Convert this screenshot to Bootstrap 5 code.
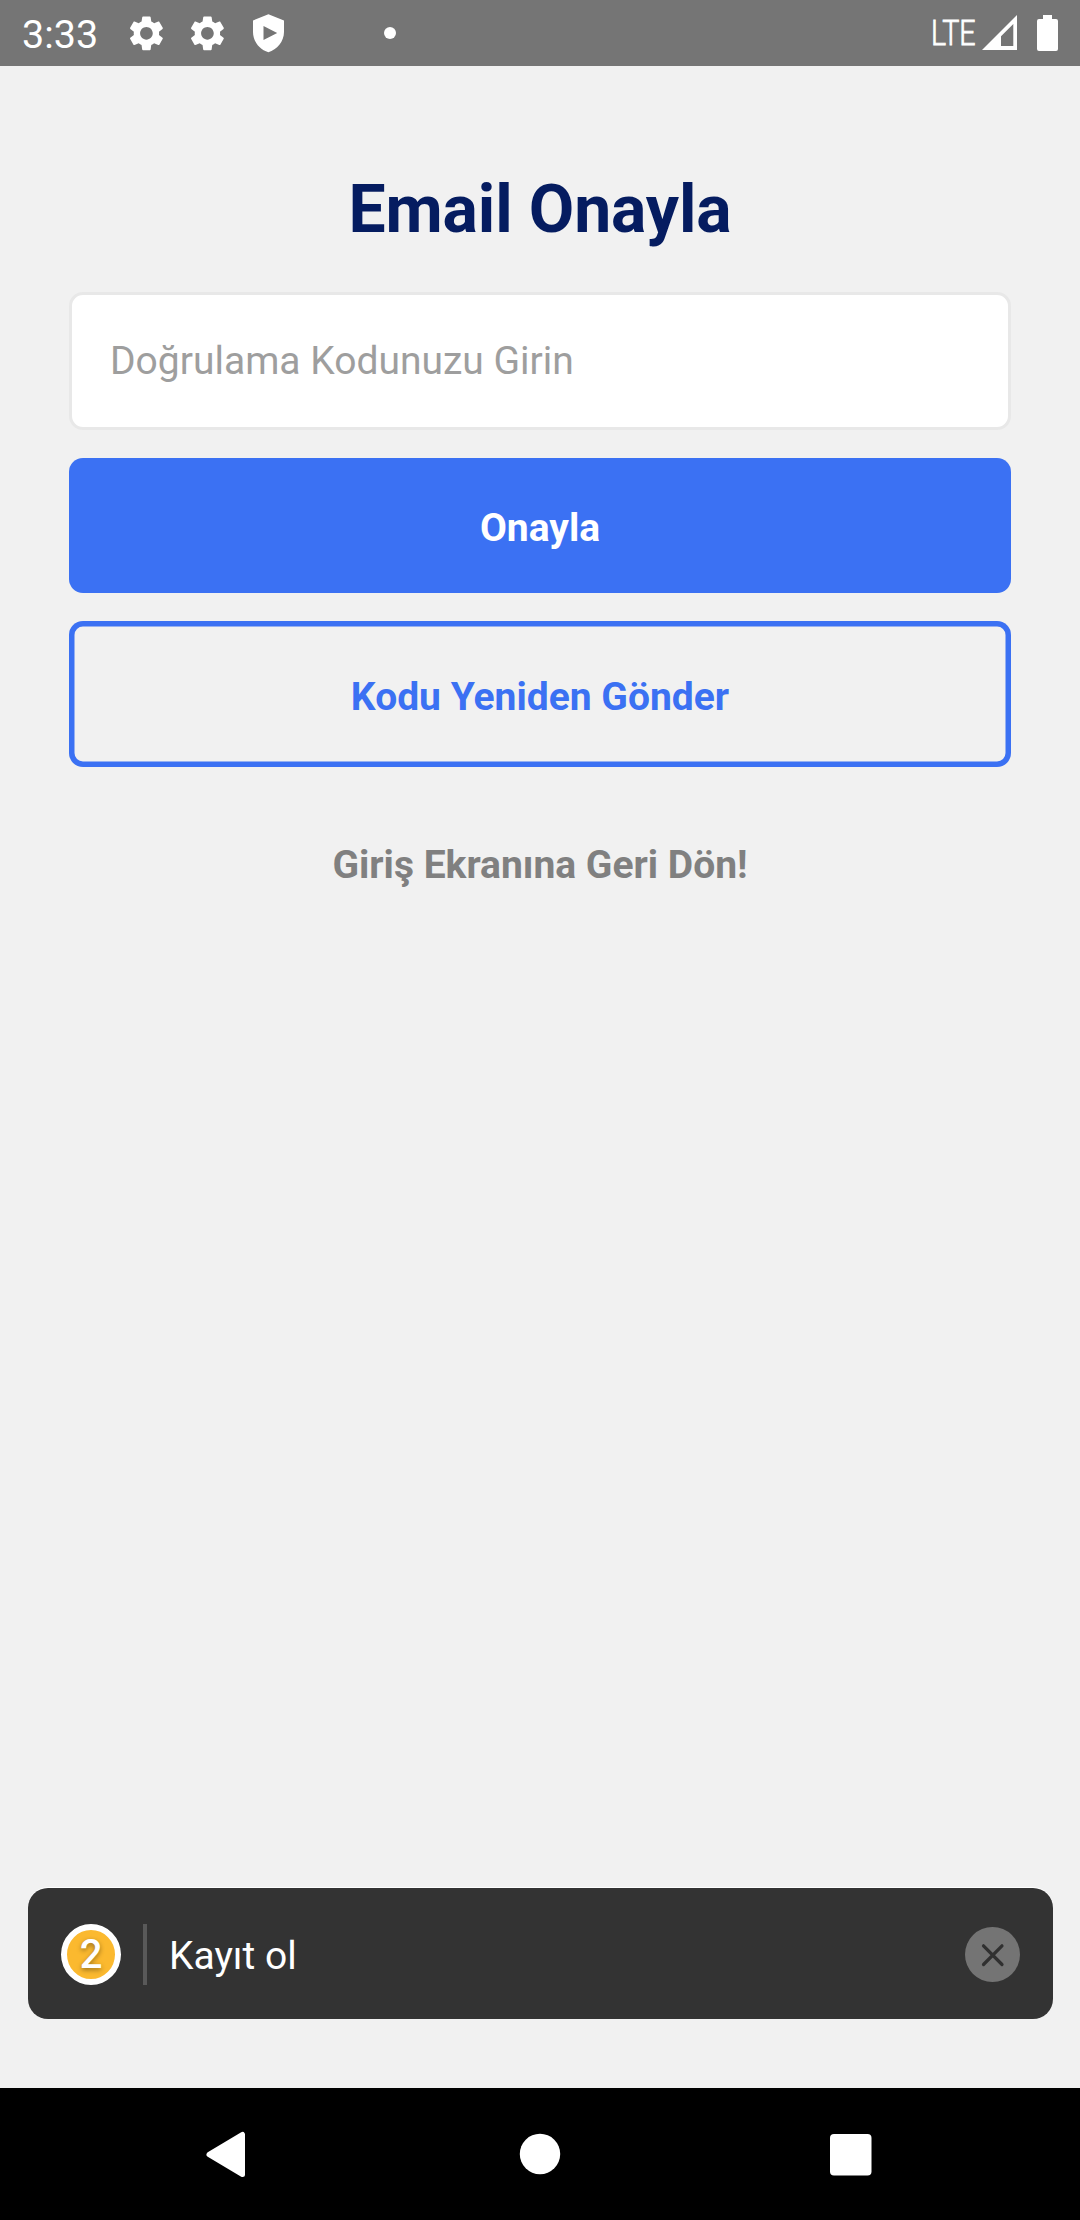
<!DOCTYPE html>
<html lang="tr">
<head>
<meta charset="utf-8">
<meta name="viewport" content="width=device-width, initial-scale=1">
<title>Email Onayla</title>
<link href="https://cdn.jsdelivr.net/npm/bootstrap@5.3.0/dist/css/bootstrap.min.css" rel="stylesheet">
<style>
  body { font-family: Roboto, "Liberation Sans", sans-serif; background: #f1f1f1; font-size: 39px; line-height: 46px; height: 2220px; overflow: hidden; }
  svg { display: block; flex: none; }
  .status-bar { height: 66px; background: #757575; color: #fff; padding-left: 22px; }
  .clock { font-size: 39.5px; width: 105px; padding-top: 4px; }
  .net-label { font-size: 34.5px; font-weight: 300; width: 49px; transform: scaleX(.83); transform-origin: left center; -webkit-text-stroke: .8px #fff; }
  .form-area { padding: 105px 69px 0; }
  .page-title { font-size: 66px; letter-spacing: -.12px; line-height: 78px; color: #051c60; margin: 0 0 43px; }
  .code-input, .code-input:focus { height: 138px; border: 3px solid #e8e8e8; border-radius: 14px; padding: 0 38px; font-size: 39px; background: #fff; margin-bottom: 28px; }
  .code-input::placeholder { color: #9e9e9e; opacity: 1; }
  .action { border: 0; border-radius: 14px; font-size: 39px; line-height: 46px; font-weight: 700; padding: 5px 0 0; }
  .action-main { height: 135px; background: #3b71f3; margin-bottom: 28px; }
  .action-resend { height: 146px; color: #3b71f3; box-shadow: inset 0 0 0 5.5px #3b71f3; margin-bottom: 28px; }
  .action-back { height: 135px; color: #808080; }
  .notice { height: 131px; margin: 0 27px 69px 28px; background: #333; border-radius: 20px; color: #fff; padding: 1px 33px 0; box-shadow: 0 -1px 0 #fff; }
  .step { width: 60px; height: 61px; border: 6px solid #fff; background: #fbb92f; font-weight: 500; font-size: 40px; padding-top: 2px; text-shadow: 0 2px 5px rgba(0,0,0,.4); }
  .rule { width: 4px; height: 61px; background: #595959; margin: 0 22px; }
  .sys-nav { height: 132px; background: #000; }
</style>
</head>
<body class="d-flex flex-column">
<header class="status-bar d-flex align-items-center">
  <span class="clock">3:33</span>
  <svg width="230" height="66" viewBox="127 0 230 66" fill="#fff">
    <defs><path id="gear" d="M19.14 12.94c.04-.3.06-.61.06-.94 0-.32-.02-.64-.07-.94l2.03-1.58c.18-.14.23-.41.12-.61l-1.92-3.32c-.12-.22-.37-.29-.59-.22l-2.39.96c-.5-.38-1.03-.7-1.62-.94l-.36-2.54c-.04-.24-.24-.41-.48-.41h-3.84c-.24 0-.43.17-.47.41l-.36 2.54c-.59.24-1.13.57-1.62.94l-2.39-.96c-.22-.08-.47 0-.59.22L2.74 8.870c-.12.21-.08.47.12.61l2.030 1.580c-.05.3-.09.63-.09.94s.02.64.07.94l-2.030 1.580c-.18.14-.23.41-.12.61l1.920 3.320c.12.22.37.29.59.22l2.390-.96c.5.38 1.030.7 1.620.94l.36 2.540c.05.24.24.41.48.41h3.840c.24 0 .44-.17.47-.41l.36-2.540c.59-.24 1.130-.56 1.620-.94l2.390.96c.22.08.47 0 .59-.22l1.920-3.320c.12-.22.07-.47-.12-.61l-2.010-1.580zM12 15.600c-1.980 0-3.600-1.620-3.600-3.600s1.620-3.600 3.600-3.600 3.600 1.620 3.600 3.600-1.620 3.600-3.600 3.600z"/></defs>
    <use href="#gear" transform="translate(125.3 12.2) scale(1.76)"/>
    <use href="#gear" transform="translate(186.3 12.2) scale(1.76)"/>
    <path fill-rule="evenodd" d="M268.400 14.300L284 20.500V32C284 41.500 277 49.800 268.400 52.200C259.800 49.800 253 41.500 253 32V20.500ZM263.500 26V40L277.200 33Z"/>
  </svg>
  <svg width="40" height="66"><circle cx="33" cy="33" r="6" fill="#fff"/></svg>
  <span class="net-label ms-auto">LTE</span>
  <svg width="100" height="66" viewBox="980 0 100 66" fill="#fff">
    <path fill-rule="evenodd" d="M982 50L1017 15V50ZM1001 46H1013.300V24L1001 36.300Z"/>
    <path d="M1043 15H1052V19H1056Q1058 19 1058 21V49Q1058 51 1056 51H1039Q1037 51 1037 49V21Q1037 19 1039 19H1043Z"/>
  </svg>
</header>
<main class="form-area flex-grow-1 d-flex flex-column">
  <h1 class="page-title fw-bold text-center">Email Onayla</h1>
  <input class="form-control code-input" type="text" placeholder="Doğrulama Kodunuzu Girin">
  <button class="btn btn-primary action action-main w-100" type="button">Onayla</button>
  <button class="btn action action-resend w-100" type="button">Kodu Yeniden Gönder</button>
  <button class="btn action action-back w-100" type="button">Giriş Ekranına Geri Dön!</button>
</main>
<div class="notice d-flex align-items-center">
  <span class="step rounded-circle d-flex align-items-center justify-content-center">2</span>
  <span class="rule"></span>
  <span class="pt-1">Kayıt ol</span>
  <svg class="ms-auto" width="55" height="55" viewBox="0 0 55 55"><circle cx="27.500" cy="27.500" r="27.500" fill="#747474"/><path d="M18.500 18.800L37 37.500M37 18.800L18.500 37.500" stroke="#303030" stroke-width="3.200" stroke-linecap="round"/></svg>
</div>
<nav class="sys-nav">
  <svg width="1080" height="132" viewBox="0 0 1080 132" fill="#fff">
    <path d="M209 66.500L242.500 46.500V86.500Z" stroke="#fff" stroke-width="5" stroke-linejoin="round"/>
    <circle cx="540" cy="66" r="20.200"/>
    <rect x="830" y="46" width="41.500" height="41.500" rx="4"/>
  </svg>
</nav>
<script src="https://cdn.jsdelivr.net/npm/bootstrap@5.3.0/dist/js/bootstrap.bundle.min.js"></script>
</body>
</html>
